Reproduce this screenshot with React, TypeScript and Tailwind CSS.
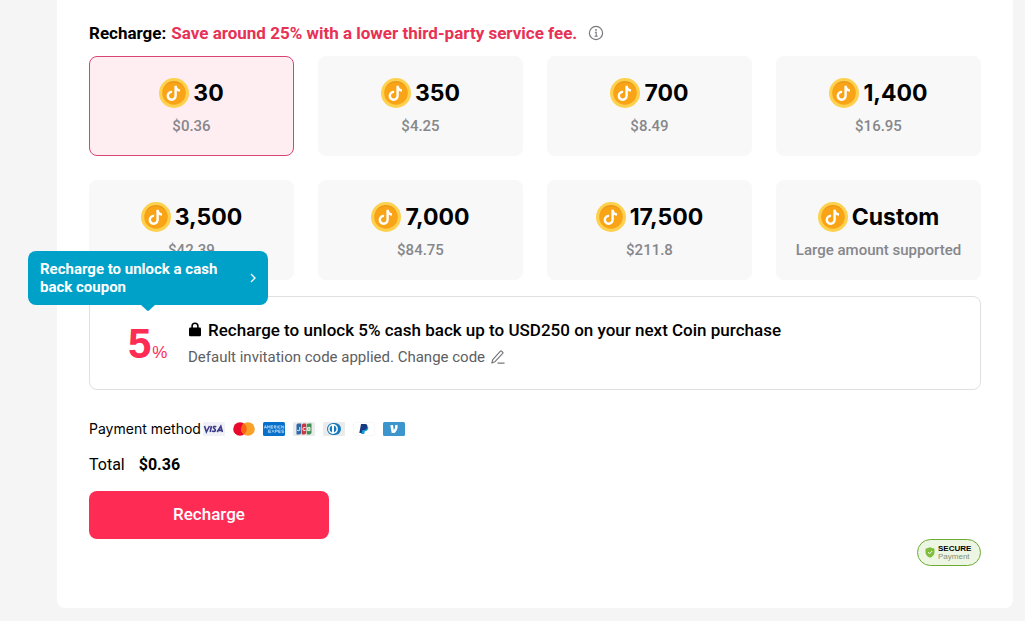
import { useState } from "react";

type Pack = { label: string; note: string };

const packs: Pack[] = [
  { label: "30", note: "$0.36" },
  { label: "350", note: "$4.25" },
  { label: "700", note: "$8.49" },
  { label: "1,400", note: "$16.95" },
  { label: "3,500", note: "$42.39" },
  { label: "7,000", note: "$84.75" },
  { label: "17,500", note: "$211.8" },
  { label: "Custom", note: "Large amount supported" },
];

function Coin() {
  return (
    <svg viewBox="0 0 30 30" className="size-[30px] shrink-0" aria-hidden="true">
      <circle cx="15" cy="15" r="15" fill="#fdd04e" />
      <circle cx="15" cy="15" r="11.8" fill="#f9a316" />
      <path d="M4.2 10.3A11.8 11.8 0 0 1 25.8 10.3A12.6 12.6 0 0 0 4.2 10.3Z" fill="#e5941a" />
      <path
        d="M16.6 7.8V17.8A3.9 3.9 0 1 1 13.1 13.9M16.6 8.2C16.9 10.7 18.3 12.3 21 12.5"
        fill="none"
        stroke="#fff"
        strokeWidth="2.4"
      />
    </svg>
  );
}

function InfoIcon() {
  return (
    <svg viewBox="0 0 16 16" className="size-4 shrink-0" fill="none" stroke="#77787c" aria-hidden="true">
      <circle cx="8" cy="8" r="6.6" strokeWidth="1.2" />
      <path d="M6.8 7.3H8.2V11.2M6.5 11.3H9.8" strokeWidth="1.1" />
      <circle cx="8" cy="4.9" r=".9" fill="#77787c" stroke="none" />
    </svg>
  );
}

function LockIcon() {
  return (
    <svg viewBox="0 0 14 16" className="h-4 w-3.5 shrink-0" aria-hidden="true">
      <path d="M4.1 7V4.2a2.9 2.9 0 0 1 5.8 0V7" fill="none" stroke="#000" strokeWidth="1.6" />
      <rect x="1" y="5.6" width="12" height="8.6" rx="1.2" fill="#000" />
    </svg>
  );
}

function PencilIcon() {
  return (
    <svg viewBox="0 0 16 16" className="block size-4" fill="none" stroke="#77787c" strokeWidth="1.2" strokeLinejoin="round" aria-hidden="true">
      <path d="M1.8 14L2.8 10.6L10.4 2.2Q11 1.6 11.6 2.2L12.7 3.2Q13.3 3.8 12.7 4.4L5 12.7ZM7.5 14.2H14.5" />
    </svg>
  );
}

function PaymentMarks() {
  return (
    <div className="flex items-center gap-2">
      <svg viewBox="0 0 22 14" className="h-3.5 w-[22px]" role="img" aria-label="Visa">
        <rect width="22" height="14" rx="1.5" fill="#f0f1f6" />
        <path
          d="M1.5 4L3.4 10L6.5 4M8.4 4L7.2 10M13.3 4.8C11.5 4.1 10.2 4.6 10.4 5.6C10.6 6.7 12.7 6.8 12.4 8.3C12.1 9.6 10.4 9.7 9 9.1M14.2 10L17.8 4.2L19.4 10M15.6 8.4H19"
          fill="none"
          stroke="#3a3a88"
          strokeWidth="1.6"
        />
      </svg>
      <svg viewBox="0 0 22 14" className="h-3.5 w-[22px]" role="img" aria-label="Mastercard">
        <circle cx="7" cy="7" r="6.8" fill="#e9092c" />
        <circle cx="15" cy="7" r="6.8" fill="#f7a12a" />
        <path d="M11 1.5A6.8 6.8 0 0 1 11 12.5A6.8 6.8 0 0 1 11 1.5Z" fill="#fb6313" />
      </svg>
      <svg viewBox="0 0 22 14" className="h-3.5 w-[22px]" role="img" aria-label="American Express">
        <rect width="22" height="14" rx="1.5" fill="#0670ca" />
        <path
          d="M1.2 6.5L2.4 3.5L3.6 6.5M1.7 5.6H3.2M4.6 6.5V3.5L5.8 5.5L7 3.5V6.5M10 3.7H8.2V6.3H10M8.2 5H10M11.2 6.5V3.7H12.8V5H11.2L13 6.5M14.2 3.5V6.5M17.6 3.9H15.6V6.2H17.6M18.7 6.5V3.6L20.7 6.4V3.5M7.8 8H5.4V10.6H7.8M5.4 9.3H7.8M8.8 8L11.3 10.6M11.3 8L8.8 10.6M12.4 10.8V8H14.4V9.3H12.4M17.6 8H15.6V10.6H17.6M15.6 9.3H17.6M20.8 8H18.8V9.3H20.6V10.6H18.6"
          fill="none"
          stroke="#b4d8f5"
          strokeWidth=".8"
        />
      </svg>
      <svg viewBox="0 0 22 14" className="h-3.5 w-[22px]" role="img" aria-label="JCB">
        <rect width="22" height="14" rx="1.5" fill="#ebebeb" />
        <path d="M5 1.5H8.2V10.5Q8.2 12.5 6.2 12.5H3.5V3Q3.5 1.5 5 1.5Z" fill="#2d6aa8" />
        <path d="M10.5 1.5H13.2V10.5Q13.2 12.5 11.2 12.5H8.8V3Q8.8 1.5 10.5 1.5Z" fill="#c93644" />
        <path d="M15.5 1.5H18.5V10.5Q18.5 12.5 16.5 12.5H13.8V3Q13.8 1.5 15.5 1.5Z" fill="#3e9150" />
        <path d="M6.8 5V8.2Q5.5 9.2 4 8.2M12.6 5.6Q9.8 4.8 9.8 7Q9.8 9.2 12.6 8.4M14.6 5.4H17V8.6H14.6ZM14.6 7H17" fill="none" stroke="#fff" strokeWidth=".9" />
      </svg>
      <svg viewBox="0 0 22 14" className="h-3.5 w-[22px]" role="img" aria-label="Diners Club">
        <rect width="22" height="14" rx="1.5" fill="#ebebeb" />
        <path d="M10 1H12A6 6 0 0 1 12 13H10Z" fill="#1479be" />
        <circle cx="10" cy="7" r="6" fill="#1479be" />
        <circle cx="10" cy="7" r="4.9" fill="#fff" />
        <path d="M9 3.5A3.7 3.7 0 0 0 9 10.5ZM11 3.5A3.7 3.7 0 0 1 11 10.5Z" fill="#1479be" />
      </svg>
      <svg viewBox="0 0 22 14" className="h-3.5 w-[22px]" role="img" aria-label="PayPal">
        <rect x=".5" y=".5" width="21" height="13" rx="1.5" fill="#fff" stroke="#f7f7f7" />
        <path d="M9 4.2H13.5Q16 4.8 15 7.3Q14.3 9.2 11.8 9.2L11.2 12H8.2Z" fill="#179bd7" />
        <path d="M8 2H12.2Q15 2.3 14.3 5.2Q13.6 8 10.6 8H9.3L8.7 11H6.3Z" fill="#173a80" />
      </svg>
      <svg viewBox="0 0 22 14" className="h-3.5 w-[22px]" role="img" aria-label="Venmo">
        <rect width="22" height="14" rx="1.5" fill="#3d95ce" />
        <path d="M7.3 3.3L10 3L10.8 8.2Q12.7 5.4 12 3.2L14.4 2.7Q15.6 6.4 11.7 11H8.7Z" fill="#fff" />
      </svg>
    </div>
  );
}

export default function App() {
  const [selected, setSelected] = useState("30");

  return (
    <div className="min-h-screen bg-[#f5f5f5] pr-3 pb-3 pl-[57px] font-['Roboto','Liberation_Sans',sans-serif] text-black">
      <main className="rounded-b-lg bg-white px-8 pt-[21px] pb-[42px]">
        <h1 className="flex items-center gap-[5px] text-[17px] leading-6 font-bold">
          Recharge:
          <span className="text-[#e73155]">Save around 25% with a lower third-party service fee.</span>
          <button type="button" aria-label="About fees" className="ml-1.5">
            <InfoIcon />
          </button>
        </h1>

        <div className="mt-[11px] grid grid-cols-4 gap-6">
          {packs.map((p) => (
            <button
              key={p.label}
              type="button"
              aria-pressed={selected === p.label}
              onClick={() => setSelected(p.label)}
              className={
                selected === p.label
                  ? "flex h-[100px] flex-col items-center rounded-lg border border-[#d84474] bg-[#feeef1] pt-5"
                  : "flex h-[100px] flex-col items-center rounded-lg border border-[#f8f8f8] bg-[#f8f8f8] pt-5"
              }
            >
              <span className="flex items-center gap-1 font-['Inter',sans-serif] text-[23px] leading-8 font-bold">
                <Coin />
                {p.label}
              </span>
              <span className="mt-[7px] text-[15px] leading-5 font-medium text-[#86878b]">{p.note}</span>
            </button>
          ))}
        </div>

        <section className="relative mt-4">
          <div className="flex h-[94px] rounded-lg border border-[#e0e0e1] pl-[38px]">
            <div className="flex w-[60px] items-baseline gap-px pt-[22px] text-[#fe2c55]">
              <span className="font-['Liberation_Sans',sans-serif] text-[42px] leading-[50px] font-bold">5</span>
              <span className="font-['Liberation_Sans',sans-serif] text-[17px]">%</span>
            </div>
            <div className="pt-[21px]">
              <h2 className="flex items-center gap-1.5 text-[17px] leading-6 font-medium">
                <LockIcon />
                Recharge to unlock 5% cash back up to USD250 on your next Coin purchase
              </h2>
              <p className="mt-[3px] flex items-center gap-[5px] text-[15px] leading-6 text-[#5d5e62]">
                Default invitation code applied. Change code
                <button type="button" aria-label="Change code">
                  <PencilIcon />
                </button>
              </p>
            </div>
          </div>
          <a
            href="#coupon"
            className="absolute -top-[45px] -left-[61px] flex h-[54px] w-60 items-center justify-between rounded-lg bg-[#00a1c9] pr-2.5 pl-3 text-[15px] leading-[18px] font-bold text-white"
          >
            <span className="w-48">Recharge to unlock a cash back coupon</span>
            <svg viewBox="0 0 10 10" className="size-2.5" fill="none" stroke="#fff" strokeWidth="1.3" aria-hidden="true">
              <path d="M3 1L7 5L3 9" />
            </svg>
            <svg viewBox="0 0 16 7" className="absolute top-[53px] left-28 h-[7px] w-4" fill="#00a1c9" aria-hidden="true">
              <path d="M0 0H16L9 6.6Q8 7.2 7 6.6Z" />
            </svg>
          </a>
        </section>

        <div className="mt-[29px] flex items-center gap-0.5 font-['Inter',sans-serif] text-sm leading-5">
          Payment method
          <PaymentMarks />
        </div>
        <div className="mt-3.5 flex gap-3.5 text-base leading-6">
          <span>Total</span>
          <strong>$0.36</strong>
        </div>
        <button
          type="button"
          className="mt-[14px] block h-12 w-60 rounded-lg bg-[#fe2c55] text-[17px] font-medium text-white"
        >
          Recharge
        </button>

        <div className="ml-auto flex h-[27px] w-16 items-center gap-[3px] rounded-full border border-[#6cab32] bg-[#edf6e3] pl-[7px]">
          <svg viewBox="0 0 10 11" className="h-[11px] w-2.5 shrink-0" aria-hidden="true">
            <path d="M5 .2L9.5 1.8V5.4Q9.3 8.8 5 10.8Q.7 8.8.5 5.4V1.8Z" fill="#80bd3c" />
            <path d="M3 5.2L4.6 6.7L7.2 4" fill="none" stroke="#fff" strokeWidth="1" />
          </svg>
          <div className="font-['Liberation_Sans',sans-serif] text-[8px] leading-2">
            <div className="font-bold">SECURE</div>
            <div className="text-[#829078]">Payment</div>
          </div>
        </div>
      </main>
    </div>
  );
}
